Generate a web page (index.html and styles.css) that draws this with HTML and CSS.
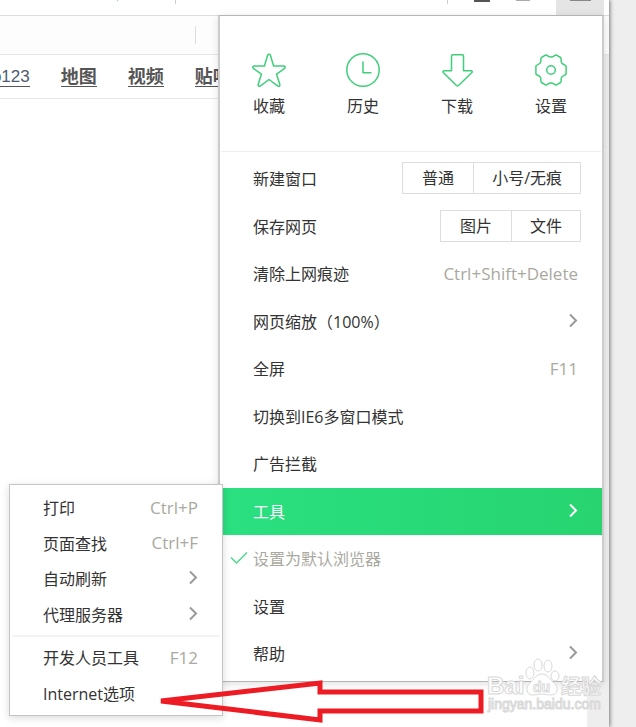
FILE: index.html
```html
<!DOCTYPE html>
<html lang="zh-CN">

<head>
    <meta charset="UTF-8" />
    <meta name="viewport" content="width=device-width, initial-scale=1.0" />
    <title>浏览器菜单</title>
    <link rel="stylesheet" href="styles.css">
</head>

<body>
    <div class="browser">
        <header class="toolbar">
            <div class="tools-left">
                <span class="dot"></span>
                <span class="sep"></span>
            </div>
            <div class="tools-right">
                <span class="sep"></span>
                <span class="mark dark"></span>
                <span class="mark"></span>
                <button class="menu-button" aria-label="菜单"><span class="mark"></span></button>
            </div>
        </header>
        <div class="address"><span class="address-sep"></span></div>

        <main class="page">
            <nav class="bookmarks">
                <a class="hao" href="#">hao123</a>
                <a href="#">地图</a>
                <a href="#">视频</a>
                <a href="#">贴吧</a>
            </nav>
            <div class="scrollbar"></div>
        </main>

        <div class="menu">
            <div class="shortcuts">
                <button>
                    <svg width="34" height="34" viewBox="0 0 34 34"><path d="M15.6 2.2q1.4-2 2.8 0L21.6 13H32q2 .7.7 2.3L24.6 21.200l3.300 10.500q0 2-2 1.400L17 26.500 8.100 33.100q-2 .6-2-1.400L9.400 21.200 1.300 15.300Q0 13.700 2 13H12.400z"/></svg>
                    收藏
                </button>
                <button>
                    <svg width="34" height="34" viewBox="0 0 34 34"><circle cx="17" cy="17" r="16.200"/><path d="M17 8.500v11.200h8.500"/></svg>
                    历史
                </button>
                <button>
                    <svg width="34" height="34" viewBox="0 0 34 34"><path d="M12.500 1.700h10q1 0 1 1V17.800h7.700q1.700.4.700 1.700L18.500 32.500q-1 .9-2 0L3.300 19.500q-1-1.300.7-1.700h7.500V2.700q0-1 1-1z"/></svg>
                    下载
                </button>
                <button>
                    <svg width="34" height="34" viewBox="0 0 34 34"><circle cx="17" cy="17" r="4.300"/><path d="M17 4C20 4 20.500 1.700 22.500 2.100L26.600 4.500C28 6 26.300 7.700 27.700 9.900S31.600 11.400 32.100 13.300V20.700C31.600 22.600 29.100 22 27.700 24.100S28 28 26.600 29.500L22.500 31.900C20.500 32.300 20 30 17 30S13.500 32.300 11.500 31.900L7.400 29.500C6 28 7.700 26.300 6.300 24.100S2.400 22.600 1.900 20.700V13.300C2.400 11.400 4.900 12 6.300 9.900S6 6 7.400 4.500L11.500 2.100C13.500 1.700 14 4 17 4z"/></svg>
                    设置
                </button>
            </div>

            <ul class="menu-list">
                <li>
                    <span class="row">新建窗口
                        <span class="group"><button>普通</button><button>小号/无痕</button></span>
                    </span>
                </li>
                <li>
                    <span class="row">保存网页
                        <span class="group"><button>图片</button><button>文件</button></span>
                    </span>
                </li>
                <li><button class="row">清除上网痕迹<span class="key">Ctrl+Shift+Delete</span></button></li>
                <li><button class="row">网页缩放（100%）<svg class="arrow" width="10" height="16" viewBox="0 0 10 16"><path d="M2 1.500 8 7.500 2 13.500"/></svg></button></li>
                <li><button class="row">全屏<span class="key">F11</span></button></li>
                <li><button class="row">切换到IE6多窗口模式</button></li>
                <li><button class="row">广告拦截</button></li>
                <li class="active">
                    <button class="row">工具<svg class="arrow" width="10" height="16" viewBox="0 0 10 16"><path d="M2 1.500 8 7.500 2 13.500"/></svg></button>
                    <ul class="submenu">
                        <li><button class="row">打印<span class="key">Ctrl+P</span></button></li>
                        <li><button class="row">页面查找<span class="key">Ctrl+F</span></button></li>
                        <li><button class="row">自动刷新<svg class="arrow" width="10" height="16" viewBox="0 0 10 16"><path d="M2 1.500 8 7.500 2 13.500"/></svg></button></li>
                        <li><button class="row">代理服务器<svg class="arrow" width="10" height="16" viewBox="0 0 10 16"><path d="M2 1.500 8 7.500 2 13.500"/></svg></button></li>
                        <li class="group-start"><button class="row">开发人员工具<span class="key">F12</span></button></li>
                        <li><button class="row">Internet选项</button></li>
                    </ul>
                </li>
                <li class="checked">
                    <button class="row"><svg class="check" width="18" height="14" viewBox="0 0 18 14"><path d="M1 6.500 6.500 12 17 1.500"/></svg>设置为默认浏览器</button>
                </li>
                <li><button class="row">设置</button></li>
                <li><button class="row">帮助<svg class="arrow" width="10" height="16" viewBox="0 0 10 16"><path d="M2 1.500 8 7.500 2 13.500"/></svg></button></li>
            </ul>

            <svg class="watermark" width="124" height="60" viewBox="0 0 124 60">
                <text class="wm-big" x="6" y="41">Bai</text>
                <path d="M61 21c-6 0-8 6-12 9-5 4-4 12 3 12 4 0 6-1 9-1s5 1 9 1c7 0 8-8 3-12-4-3-6-9-12-9z"/>
                <ellipse cx="49" cy="20" rx="4" ry="6"/>
                <ellipse cx="57" cy="12" rx="4" ry="6"/>
                <ellipse cx="67" cy="13" rx="4" ry="6"/>
                <ellipse cx="74" cy="23" rx="4" ry="5"/>
                <text class="wm-du" x="52" y="39">du</text>
                <text class="wm-cn" x="80" y="41">经验</text>
                <text class="wm-url" x="7" y="56">jingyan.baidu.com</text>
            </svg>

            <svg class="pointer" width="332" height="50" viewBox="0 0 332 50">
                <path d="M5 26 164 8V17H325V36H164V45z"/>
            </svg>
        </div>
    </div>
</body>

</html>
```
FILE: styles.css
```css
* {
    box-sizing: border-box;
}

body {
    margin: 0;
    background: #eee;
    font-family: "Open Sans", "Noto Sans CJK SC", sans-serif;
    font-size: 16px;
    color: #333;
    overflow: hidden;
}

button {
    margin: 0;
    padding: 0;
    border: none;
    background: none;
    font: inherit;
    color: inherit;
    cursor: pointer;
}

ul {
    margin: 0;
    padding: 0;
    list-style: none;
}

.browser {
    position: relative;
    display: flex;
    flex-direction: column;
    min-height: 100vh;
    margin-right: 27px;
    background: #fff;
    box-shadow: 1px 0 4px rgba(0, 0, 0, 0.5);
}

/* toolbar */
.toolbar {
    display: flex;
    justify-content: space-between;
    height: 16px;
    border-bottom: 1px solid #ddd;
}

.tools-left,
.tools-right {
    display: flex;
    align-items: flex-start;
}

.tools-left {
    gap: 57px;
    padding-left: 117px;
}

.tools-right {
    gap: 26px;
    padding-right: 5px;
}

.dot {
    width: 1px;
    height: 1px;
    background: #7be0a2;
}

.sep {
    width: 1px;
    height: 4px;
    background: #ccc;
}

.mark {
    width: 14px;
    height: 1px;
    background: #aaa;
}

.mark.dark {
    width: 16px;
    height: 2px;
    background: #555;
}

.menu-button {
    display: flex;
    justify-content: center;
    width: 48px;
    height: 15px;
    background: #e5e5e5;
}

.menu-button .mark {
    width: 21px;
    background: #888;
}

.address {
    display: flex;
    align-items: center;
    height: 39px;
    padding-left: 195px;
    background: #fdfdfd;
    border-bottom: 1px solid #e5e5e5;
}

.address-sep {
    width: 1px;
    height: 18px;
    background: #ddd;
}

.page {
    flex: 1;
    display: flex;
    align-items: stretch;
}

.bookmarks {
    flex: 1;
    display: flex;
    align-items: center;
    gap: 31px;
    height: 44px;
    border-bottom: 1px solid #e8e8e8;
    overflow: hidden;
}

.bookmarks a {
    flex: none;
    height: 20px;
    border-bottom: 1px solid #555;
    color: #555;
    font-size: 18px;
    line-height: 18px;
    font-weight: bold;
    text-decoration: none;
}

.bookmarks .hao {
    margin-left: -27px;
    color: #4f5a70;
    font-family: "Liberation Sans", Arial, sans-serif;
    font-size: 17px;
    line-height: 20px;
    font-weight: normal;
}

.scrollbar {
    width: 22px;
    background: #eee;
}

/* main menu */
.menu {
    position: absolute;
    top: 15px;
    right: 5px;
    width: 386px;
    padding-bottom: 3px;
    background: #fff;
    border: 1px solid #bbb;
    border-width: 1px 2px;
    border-color: #b5b5b5 #ccc;
    box-shadow: 0 2px 8px rgba(0, 0, 0, 0.12);
}

.shortcuts {
    display: grid;
    grid-template-columns: repeat(4, 1fr);
    height: 136px;
    margin: 0 1px 3px;
    padding: 37px 3px 0 1px;
    border-bottom: 1px solid #eee;
}

.shortcuts button {
    display: flex;
    flex-direction: column;
    align-items: center;
    gap: 7px;
    height: 66px;
    line-height: 24px;
}

.shortcuts svg {
    fill: none;
    stroke: #3fcf7a;
    stroke-width: 1.500;
    stroke-linejoin: round;
}

.row {
    display: flex;
    align-items: center;
    justify-content: space-between;
    width: 100%;
    height: 100%;
    padding: 0 24px 2px 33px;
    white-space: nowrap;
    text-align: left;
}

.menu-list > li {
    position: relative;
    height: 48px;
}

.menu-list > li:nth-child(even) {
    height: 47px;
}

.group {
    display: flex;
    margin-right: -3px;
    border: 1px solid #ddd;
}

.group button {
    height: 30px;
    padding: 0 19px;
    line-height: 28px;
}

.group button + button {
    padding: 0 18px;
    border-left: 1px solid #ddd;
}

.key {
    color: #a9a9a0;
    font-size: 17px;
}

.arrow,
.check {
    fill: none;
    stroke: #999;
    stroke-width: 2;
}

.active {
    background: linear-gradient(90deg, #2ae080, #27d470);
}

.active > .row {
    color: #fff;
}

.active > .row .arrow {
    stroke: #fff;
}

.checked .row {
    justify-content: flex-start;
    gap: 5px;
    padding-left: 10px;
    color: #a9a9a0;
}

.check {
    stroke: #4fd88a;
    stroke-width: 1.500;
}

/* submenu */
.submenu {
    position: absolute;
    top: -4px;
    right: calc(100% - 3px);
    width: 214px;
    padding: 5px 0 4px;
    background: #fff;
    border: 1px solid #c4c4c4;
    box-shadow: 0 2px 8px rgba(0, 0, 0, 0.15);
}

.submenu li {
    height: 36px;
}

.submenu li:nth-child(even) {
    height: 35px;
}

.submenu .group-start {
    height: 44px;
    padding-top: 3px;
}

.submenu .group-start::before {
    content: "";
    display: block;
    height: 2px;
    margin: 0 2px 3px;
    background: #f3f3f3;
}

.submenu .group-start .row {
    height: 36px;
}

/* overlays */
.watermark {
    position: absolute;
    right: -3px;
    bottom: -32px;
    fill: #fff;
    stroke: #d8d8d8;
    stroke-width: 1;
    font-family: "Liberation Sans", Arial, sans-serif;
    font-weight: bold;
}

.wm-big {
    font-size: 24px;
}

.wm-du {
    font-size: 14px;
}

.wm-cn {
    font-family: "Noto Sans CJK SC", sans-serif;
    font-size: 20px;
}

.wm-url {
    font-size: 14px;
    font-weight: normal;
}

.pointer {
    position: absolute;
    left: -64px;
    bottom: -44px;
    fill: none;
    stroke: #ed1c24;
    stroke-width: 5;
}
```
